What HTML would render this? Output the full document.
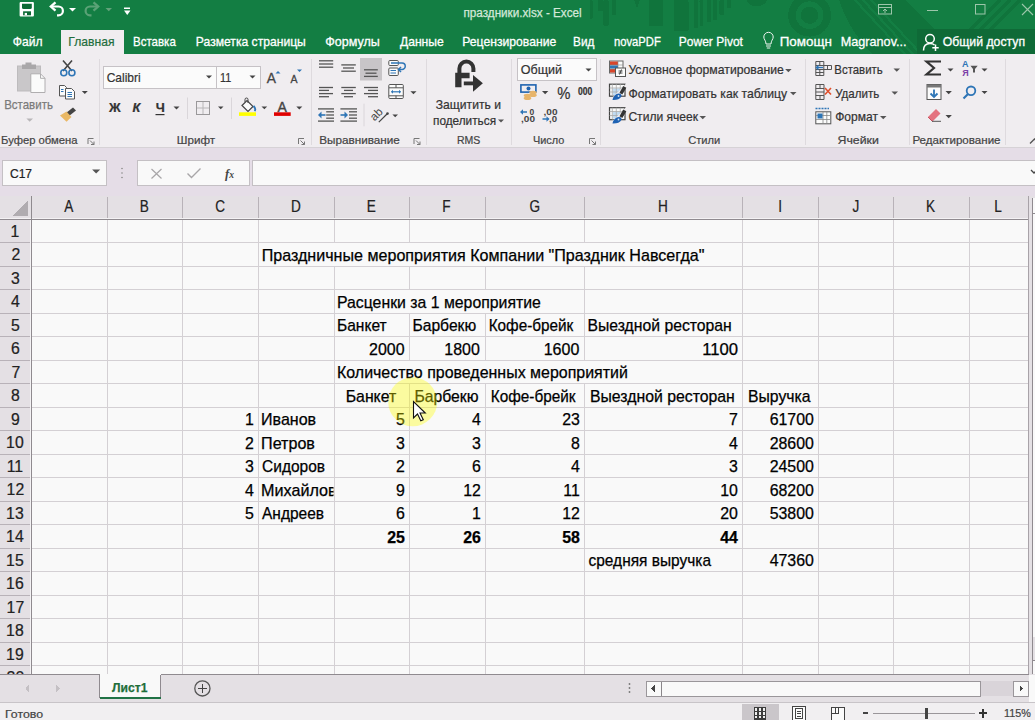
<!DOCTYPE html>
<html><head><meta charset="utf-8"><style>
html,body{margin:0;padding:0;width:1035px;height:720px;overflow:hidden;background:#f9f9f9;}
svg{position:absolute;left:0;top:0;display:block;}
text{white-space:pre;}
</style></head><body>
<svg width="1035" height="720" viewBox="0 0 1035 720" shape-rendering="crispEdges">
<rect x="0" y="0" width="1035" height="54" fill="#137e43" />
<rect x="589.6" y="0" width="3.199999999999932" height="19" fill="#10743c" rx="1.5"/>
<rect x="598" y="0" width="5" height="11" fill="#10743c" rx="1.5"/>
<rect x="603.4" y="0" width="5.300000000000068" height="26" fill="#10743c" rx="1.5"/>
<rect x="612" y="0" width="4" height="15" fill="#10743c" rx="1.5"/>
<rect x="649" y="0" width="14" height="26" fill="#10743c" rx="1.5"/>
<rect x="673.6" y="0" width="14.899999999999977" height="31" fill="#10743c" rx="1.5"/>
<rect x="693.8" y="0" width="4.2000000000000455" height="28" fill="#10743c" rx="1.5"/>
<rect x="699.5" y="0" width="3.5" height="26" fill="#10743c" rx="1.5"/>
<rect x="706.6" y="0" width="4.399999999999977" height="22" fill="#10743c" rx="1.5"/>
<rect x="713" y="0" width="4" height="20" fill="#10743c" rx="1.5"/>
<rect x="719.4" y="0" width="4.600000000000023" height="15" fill="#10743c" rx="1.5"/>
<rect x="726.8" y="0" width="4.2000000000000455" height="8" fill="#10743c" rx="1.5"/>
<path d="M634 0 L640 0 L637 8 Z" fill="#10743c"/>
<circle cx="757" cy="-5" r="11.5" fill="#10743c"/>
<circle cx="809.6" cy="15.2" r="17.6" fill="none" stroke="#10743c" stroke-width="7.6"/>
<circle cx="809.6" cy="15.2" r="8.7" fill="#10743c"/>
<path d="M839 0 H905 L935 30 L930 54 H872 C858 40 845 20 839 0 Z" fill="#10743c"/>
<line x1="855" y1="0" x2="905" y2="54" stroke="#137e43" stroke-width="2.2"/>
<line x1="863" y1="0" x2="913" y2="54" stroke="#137e43" stroke-width="2.2"/>
<line x1="871" y1="0" x2="921" y2="54" stroke="#137e43" stroke-width="2.2"/>
<path d="M905 0 H925 L960 35 L950 40 Z" fill="#137e43"/>
<line x1="1000" y1="0" x2="960" y2="40" stroke="#10743c" stroke-width="4"/>
<line x1="1010" y1="0" x2="970" y2="40" stroke="#10743c" stroke-width="4"/>
<line x1="1020" y1="0" x2="980" y2="40" stroke="#10743c" stroke-width="4"/>
<rect x="917" y="29" width="118" height="25" fill="#0f6a37" />
<rect x="61" y="30" width="63" height="25" fill="#f0edf0" />
<rect x="0" y="54" width="1035" height="94" fill="#f0edf0" />
<line x1="0" y1="147.5" x2="1035" y2="147.5" stroke="#d6d2d6" stroke-width="1" />
<line x1="99.5" y1="59" x2="99.5" y2="145" stroke="#dedade" stroke-width="1" />
<line x1="311.5" y1="59" x2="311.5" y2="145" stroke="#dedade" stroke-width="1" />
<line x1="426.5" y1="59" x2="426.5" y2="145" stroke="#dedade" stroke-width="1" />
<line x1="511.5" y1="59" x2="511.5" y2="145" stroke="#dedade" stroke-width="1" />
<line x1="600.5" y1="59" x2="600.5" y2="145" stroke="#dedade" stroke-width="1" />
<line x1="805.5" y1="59" x2="805.5" y2="145" stroke="#dedade" stroke-width="1" />
<line x1="909.5" y1="59" x2="909.5" y2="145" stroke="#dedade" stroke-width="1" />
<line x1="1005.5" y1="59" x2="1005.5" y2="145" stroke="#dedade" stroke-width="1" />
<rect x="0" y="148" width="1035" height="48" fill="#e5dde7" />
<rect x="2.5" y="160.5" width="103.5" height="25" fill="#f9f9f9" stroke="#c4c0c4" stroke-width="1"/>
<rect x="137.5" y="160.5" width="111.5" height="25" fill="#f9f9f9" stroke="#c4c0c4" stroke-width="1"/>
<rect x="252.5" y="160.5" width="790" height="25" fill="#f9f9f9" stroke="#c4c0c4" stroke-width="1"/>
<rect x="0" y="196" width="1035" height="23" fill="#e4e0e4" />
<rect x="31.5" y="220" width="997" height="455" fill="#f9f9f9" />
<rect x="0" y="219" width="31" height="456" fill="#e4e0e4" />
<line x1="107.5" y1="219.5" x2="107.5" y2="242.5" stroke="#d4d0d4" stroke-width="1" />
<line x1="107.5" y1="242.5" x2="107.5" y2="266.5" stroke="#d4d0d4" stroke-width="1" />
<line x1="107.5" y1="266.5" x2="107.5" y2="289.5" stroke="#d4d0d4" stroke-width="1" />
<line x1="107.5" y1="289.5" x2="107.5" y2="313.5" stroke="#d4d0d4" stroke-width="1" />
<line x1="107.5" y1="313.5" x2="107.5" y2="336.5" stroke="#d4d0d4" stroke-width="1" />
<line x1="107.5" y1="336.5" x2="107.5" y2="360.5" stroke="#d4d0d4" stroke-width="1" />
<line x1="107.5" y1="360.5" x2="107.5" y2="383.5" stroke="#d4d0d4" stroke-width="1" />
<line x1="107.5" y1="383.5" x2="107.5" y2="407.5" stroke="#d4d0d4" stroke-width="1" />
<line x1="107.5" y1="407.5" x2="107.5" y2="430.5" stroke="#d4d0d4" stroke-width="1" />
<line x1="107.5" y1="430.5" x2="107.5" y2="454.5" stroke="#d4d0d4" stroke-width="1" />
<line x1="107.5" y1="454.5" x2="107.5" y2="477.5" stroke="#d4d0d4" stroke-width="1" />
<line x1="107.5" y1="477.5" x2="107.5" y2="501.5" stroke="#d4d0d4" stroke-width="1" />
<line x1="107.5" y1="501.5" x2="107.5" y2="524.5" stroke="#d4d0d4" stroke-width="1" />
<line x1="107.5" y1="524.5" x2="107.5" y2="548.5" stroke="#d4d0d4" stroke-width="1" />
<line x1="107.5" y1="548.5" x2="107.5" y2="571.5" stroke="#d4d0d4" stroke-width="1" />
<line x1="107.5" y1="571.5" x2="107.5" y2="595.5" stroke="#d4d0d4" stroke-width="1" />
<line x1="107.5" y1="595.5" x2="107.5" y2="618.5" stroke="#d4d0d4" stroke-width="1" />
<line x1="107.5" y1="618.5" x2="107.5" y2="642.5" stroke="#d4d0d4" stroke-width="1" />
<line x1="107.5" y1="642.5" x2="107.5" y2="665.5" stroke="#d4d0d4" stroke-width="1" />
<line x1="107.5" y1="665.5" x2="107.5" y2="674" stroke="#d4d0d4" stroke-width="1" />
<line x1="182.5" y1="219.5" x2="182.5" y2="242.5" stroke="#d4d0d4" stroke-width="1" />
<line x1="182.5" y1="242.5" x2="182.5" y2="266.5" stroke="#d4d0d4" stroke-width="1" />
<line x1="182.5" y1="266.5" x2="182.5" y2="289.5" stroke="#d4d0d4" stroke-width="1" />
<line x1="182.5" y1="289.5" x2="182.5" y2="313.5" stroke="#d4d0d4" stroke-width="1" />
<line x1="182.5" y1="313.5" x2="182.5" y2="336.5" stroke="#d4d0d4" stroke-width="1" />
<line x1="182.5" y1="336.5" x2="182.5" y2="360.5" stroke="#d4d0d4" stroke-width="1" />
<line x1="182.5" y1="360.5" x2="182.5" y2="383.5" stroke="#d4d0d4" stroke-width="1" />
<line x1="182.5" y1="383.5" x2="182.5" y2="407.5" stroke="#d4d0d4" stroke-width="1" />
<line x1="182.5" y1="407.5" x2="182.5" y2="430.5" stroke="#d4d0d4" stroke-width="1" />
<line x1="182.5" y1="430.5" x2="182.5" y2="454.5" stroke="#d4d0d4" stroke-width="1" />
<line x1="182.5" y1="454.5" x2="182.5" y2="477.5" stroke="#d4d0d4" stroke-width="1" />
<line x1="182.5" y1="477.5" x2="182.5" y2="501.5" stroke="#d4d0d4" stroke-width="1" />
<line x1="182.5" y1="501.5" x2="182.5" y2="524.5" stroke="#d4d0d4" stroke-width="1" />
<line x1="182.5" y1="524.5" x2="182.5" y2="548.5" stroke="#d4d0d4" stroke-width="1" />
<line x1="182.5" y1="548.5" x2="182.5" y2="571.5" stroke="#d4d0d4" stroke-width="1" />
<line x1="182.5" y1="571.5" x2="182.5" y2="595.5" stroke="#d4d0d4" stroke-width="1" />
<line x1="182.5" y1="595.5" x2="182.5" y2="618.5" stroke="#d4d0d4" stroke-width="1" />
<line x1="182.5" y1="618.5" x2="182.5" y2="642.5" stroke="#d4d0d4" stroke-width="1" />
<line x1="182.5" y1="642.5" x2="182.5" y2="665.5" stroke="#d4d0d4" stroke-width="1" />
<line x1="182.5" y1="665.5" x2="182.5" y2="674" stroke="#d4d0d4" stroke-width="1" />
<line x1="258.5" y1="219.5" x2="258.5" y2="242.5" stroke="#d4d0d4" stroke-width="1" />
<line x1="258.5" y1="242.5" x2="258.5" y2="266.5" stroke="#d4d0d4" stroke-width="1" />
<line x1="258.5" y1="266.5" x2="258.5" y2="289.5" stroke="#d4d0d4" stroke-width="1" />
<line x1="258.5" y1="289.5" x2="258.5" y2="313.5" stroke="#d4d0d4" stroke-width="1" />
<line x1="258.5" y1="313.5" x2="258.5" y2="336.5" stroke="#d4d0d4" stroke-width="1" />
<line x1="258.5" y1="336.5" x2="258.5" y2="360.5" stroke="#d4d0d4" stroke-width="1" />
<line x1="258.5" y1="360.5" x2="258.5" y2="383.5" stroke="#d4d0d4" stroke-width="1" />
<line x1="258.5" y1="383.5" x2="258.5" y2="407.5" stroke="#d4d0d4" stroke-width="1" />
<line x1="258.5" y1="407.5" x2="258.5" y2="430.5" stroke="#d4d0d4" stroke-width="1" />
<line x1="258.5" y1="430.5" x2="258.5" y2="454.5" stroke="#d4d0d4" stroke-width="1" />
<line x1="258.5" y1="454.5" x2="258.5" y2="477.5" stroke="#d4d0d4" stroke-width="1" />
<line x1="258.5" y1="477.5" x2="258.5" y2="501.5" stroke="#d4d0d4" stroke-width="1" />
<line x1="258.5" y1="501.5" x2="258.5" y2="524.5" stroke="#d4d0d4" stroke-width="1" />
<line x1="258.5" y1="524.5" x2="258.5" y2="548.5" stroke="#d4d0d4" stroke-width="1" />
<line x1="258.5" y1="548.5" x2="258.5" y2="571.5" stroke="#d4d0d4" stroke-width="1" />
<line x1="258.5" y1="571.5" x2="258.5" y2="595.5" stroke="#d4d0d4" stroke-width="1" />
<line x1="258.5" y1="595.5" x2="258.5" y2="618.5" stroke="#d4d0d4" stroke-width="1" />
<line x1="258.5" y1="618.5" x2="258.5" y2="642.5" stroke="#d4d0d4" stroke-width="1" />
<line x1="258.5" y1="642.5" x2="258.5" y2="665.5" stroke="#d4d0d4" stroke-width="1" />
<line x1="258.5" y1="665.5" x2="258.5" y2="674" stroke="#d4d0d4" stroke-width="1" />
<line x1="334.5" y1="219.5" x2="334.5" y2="242.5" stroke="#d4d0d4" stroke-width="1" />
<line x1="334.5" y1="266.5" x2="334.5" y2="289.5" stroke="#d4d0d4" stroke-width="1" />
<line x1="334.5" y1="289.5" x2="334.5" y2="313.5" stroke="#d4d0d4" stroke-width="1" />
<line x1="334.5" y1="313.5" x2="334.5" y2="336.5" stroke="#d4d0d4" stroke-width="1" />
<line x1="334.5" y1="336.5" x2="334.5" y2="360.5" stroke="#d4d0d4" stroke-width="1" />
<line x1="334.5" y1="360.5" x2="334.5" y2="383.5" stroke="#d4d0d4" stroke-width="1" />
<line x1="334.5" y1="383.5" x2="334.5" y2="407.5" stroke="#d4d0d4" stroke-width="1" />
<line x1="334.5" y1="407.5" x2="334.5" y2="430.5" stroke="#d4d0d4" stroke-width="1" />
<line x1="334.5" y1="430.5" x2="334.5" y2="454.5" stroke="#d4d0d4" stroke-width="1" />
<line x1="334.5" y1="454.5" x2="334.5" y2="477.5" stroke="#d4d0d4" stroke-width="1" />
<line x1="334.5" y1="477.5" x2="334.5" y2="501.5" stroke="#d4d0d4" stroke-width="1" />
<line x1="334.5" y1="501.5" x2="334.5" y2="524.5" stroke="#d4d0d4" stroke-width="1" />
<line x1="334.5" y1="524.5" x2="334.5" y2="548.5" stroke="#d4d0d4" stroke-width="1" />
<line x1="334.5" y1="548.5" x2="334.5" y2="571.5" stroke="#d4d0d4" stroke-width="1" />
<line x1="334.5" y1="571.5" x2="334.5" y2="595.5" stroke="#d4d0d4" stroke-width="1" />
<line x1="334.5" y1="595.5" x2="334.5" y2="618.5" stroke="#d4d0d4" stroke-width="1" />
<line x1="334.5" y1="618.5" x2="334.5" y2="642.5" stroke="#d4d0d4" stroke-width="1" />
<line x1="334.5" y1="642.5" x2="334.5" y2="665.5" stroke="#d4d0d4" stroke-width="1" />
<line x1="334.5" y1="665.5" x2="334.5" y2="674" stroke="#d4d0d4" stroke-width="1" />
<line x1="409.5" y1="219.5" x2="409.5" y2="242.5" stroke="#d4d0d4" stroke-width="1" />
<line x1="409.5" y1="266.5" x2="409.5" y2="289.5" stroke="#d4d0d4" stroke-width="1" />
<line x1="409.5" y1="313.5" x2="409.5" y2="336.5" stroke="#d4d0d4" stroke-width="1" />
<line x1="409.5" y1="336.5" x2="409.5" y2="360.5" stroke="#d4d0d4" stroke-width="1" />
<line x1="409.5" y1="383.5" x2="409.5" y2="407.5" stroke="#d4d0d4" stroke-width="1" />
<line x1="409.5" y1="407.5" x2="409.5" y2="430.5" stroke="#d4d0d4" stroke-width="1" />
<line x1="409.5" y1="430.5" x2="409.5" y2="454.5" stroke="#d4d0d4" stroke-width="1" />
<line x1="409.5" y1="454.5" x2="409.5" y2="477.5" stroke="#d4d0d4" stroke-width="1" />
<line x1="409.5" y1="477.5" x2="409.5" y2="501.5" stroke="#d4d0d4" stroke-width="1" />
<line x1="409.5" y1="501.5" x2="409.5" y2="524.5" stroke="#d4d0d4" stroke-width="1" />
<line x1="409.5" y1="524.5" x2="409.5" y2="548.5" stroke="#d4d0d4" stroke-width="1" />
<line x1="409.5" y1="548.5" x2="409.5" y2="571.5" stroke="#d4d0d4" stroke-width="1" />
<line x1="409.5" y1="571.5" x2="409.5" y2="595.5" stroke="#d4d0d4" stroke-width="1" />
<line x1="409.5" y1="595.5" x2="409.5" y2="618.5" stroke="#d4d0d4" stroke-width="1" />
<line x1="409.5" y1="618.5" x2="409.5" y2="642.5" stroke="#d4d0d4" stroke-width="1" />
<line x1="409.5" y1="642.5" x2="409.5" y2="665.5" stroke="#d4d0d4" stroke-width="1" />
<line x1="409.5" y1="665.5" x2="409.5" y2="674" stroke="#d4d0d4" stroke-width="1" />
<line x1="485.5" y1="219.5" x2="485.5" y2="242.5" stroke="#d4d0d4" stroke-width="1" />
<line x1="485.5" y1="266.5" x2="485.5" y2="289.5" stroke="#d4d0d4" stroke-width="1" />
<line x1="485.5" y1="313.5" x2="485.5" y2="336.5" stroke="#d4d0d4" stroke-width="1" />
<line x1="485.5" y1="336.5" x2="485.5" y2="360.5" stroke="#d4d0d4" stroke-width="1" />
<line x1="485.5" y1="383.5" x2="485.5" y2="407.5" stroke="#d4d0d4" stroke-width="1" />
<line x1="485.5" y1="407.5" x2="485.5" y2="430.5" stroke="#d4d0d4" stroke-width="1" />
<line x1="485.5" y1="430.5" x2="485.5" y2="454.5" stroke="#d4d0d4" stroke-width="1" />
<line x1="485.5" y1="454.5" x2="485.5" y2="477.5" stroke="#d4d0d4" stroke-width="1" />
<line x1="485.5" y1="477.5" x2="485.5" y2="501.5" stroke="#d4d0d4" stroke-width="1" />
<line x1="485.5" y1="501.5" x2="485.5" y2="524.5" stroke="#d4d0d4" stroke-width="1" />
<line x1="485.5" y1="524.5" x2="485.5" y2="548.5" stroke="#d4d0d4" stroke-width="1" />
<line x1="485.5" y1="548.5" x2="485.5" y2="571.5" stroke="#d4d0d4" stroke-width="1" />
<line x1="485.5" y1="571.5" x2="485.5" y2="595.5" stroke="#d4d0d4" stroke-width="1" />
<line x1="485.5" y1="595.5" x2="485.5" y2="618.5" stroke="#d4d0d4" stroke-width="1" />
<line x1="485.5" y1="618.5" x2="485.5" y2="642.5" stroke="#d4d0d4" stroke-width="1" />
<line x1="485.5" y1="642.5" x2="485.5" y2="665.5" stroke="#d4d0d4" stroke-width="1" />
<line x1="485.5" y1="665.5" x2="485.5" y2="674" stroke="#d4d0d4" stroke-width="1" />
<line x1="584.5" y1="219.5" x2="584.5" y2="242.5" stroke="#d4d0d4" stroke-width="1" />
<line x1="584.5" y1="266.5" x2="584.5" y2="289.5" stroke="#d4d0d4" stroke-width="1" />
<line x1="584.5" y1="289.5" x2="584.5" y2="313.5" stroke="#d4d0d4" stroke-width="1" />
<line x1="584.5" y1="313.5" x2="584.5" y2="336.5" stroke="#d4d0d4" stroke-width="1" />
<line x1="584.5" y1="336.5" x2="584.5" y2="360.5" stroke="#d4d0d4" stroke-width="1" />
<line x1="584.5" y1="383.5" x2="584.5" y2="407.5" stroke="#d4d0d4" stroke-width="1" />
<line x1="584.5" y1="407.5" x2="584.5" y2="430.5" stroke="#d4d0d4" stroke-width="1" />
<line x1="584.5" y1="430.5" x2="584.5" y2="454.5" stroke="#d4d0d4" stroke-width="1" />
<line x1="584.5" y1="454.5" x2="584.5" y2="477.5" stroke="#d4d0d4" stroke-width="1" />
<line x1="584.5" y1="477.5" x2="584.5" y2="501.5" stroke="#d4d0d4" stroke-width="1" />
<line x1="584.5" y1="501.5" x2="584.5" y2="524.5" stroke="#d4d0d4" stroke-width="1" />
<line x1="584.5" y1="524.5" x2="584.5" y2="548.5" stroke="#d4d0d4" stroke-width="1" />
<line x1="584.5" y1="548.5" x2="584.5" y2="571.5" stroke="#d4d0d4" stroke-width="1" />
<line x1="584.5" y1="571.5" x2="584.5" y2="595.5" stroke="#d4d0d4" stroke-width="1" />
<line x1="584.5" y1="595.5" x2="584.5" y2="618.5" stroke="#d4d0d4" stroke-width="1" />
<line x1="584.5" y1="618.5" x2="584.5" y2="642.5" stroke="#d4d0d4" stroke-width="1" />
<line x1="584.5" y1="642.5" x2="584.5" y2="665.5" stroke="#d4d0d4" stroke-width="1" />
<line x1="584.5" y1="665.5" x2="584.5" y2="674" stroke="#d4d0d4" stroke-width="1" />
<line x1="742.5" y1="219.5" x2="742.5" y2="242.5" stroke="#d4d0d4" stroke-width="1" />
<line x1="742.5" y1="242.5" x2="742.5" y2="266.5" stroke="#d4d0d4" stroke-width="1" />
<line x1="742.5" y1="266.5" x2="742.5" y2="289.5" stroke="#d4d0d4" stroke-width="1" />
<line x1="742.5" y1="289.5" x2="742.5" y2="313.5" stroke="#d4d0d4" stroke-width="1" />
<line x1="742.5" y1="313.5" x2="742.5" y2="336.5" stroke="#d4d0d4" stroke-width="1" />
<line x1="742.5" y1="336.5" x2="742.5" y2="360.5" stroke="#d4d0d4" stroke-width="1" />
<line x1="742.5" y1="360.5" x2="742.5" y2="383.5" stroke="#d4d0d4" stroke-width="1" />
<line x1="742.5" y1="383.5" x2="742.5" y2="407.5" stroke="#d4d0d4" stroke-width="1" />
<line x1="742.5" y1="407.5" x2="742.5" y2="430.5" stroke="#d4d0d4" stroke-width="1" />
<line x1="742.5" y1="430.5" x2="742.5" y2="454.5" stroke="#d4d0d4" stroke-width="1" />
<line x1="742.5" y1="454.5" x2="742.5" y2="477.5" stroke="#d4d0d4" stroke-width="1" />
<line x1="742.5" y1="477.5" x2="742.5" y2="501.5" stroke="#d4d0d4" stroke-width="1" />
<line x1="742.5" y1="501.5" x2="742.5" y2="524.5" stroke="#d4d0d4" stroke-width="1" />
<line x1="742.5" y1="524.5" x2="742.5" y2="548.5" stroke="#d4d0d4" stroke-width="1" />
<line x1="742.5" y1="548.5" x2="742.5" y2="571.5" stroke="#d4d0d4" stroke-width="1" />
<line x1="742.5" y1="571.5" x2="742.5" y2="595.5" stroke="#d4d0d4" stroke-width="1" />
<line x1="742.5" y1="595.5" x2="742.5" y2="618.5" stroke="#d4d0d4" stroke-width="1" />
<line x1="742.5" y1="618.5" x2="742.5" y2="642.5" stroke="#d4d0d4" stroke-width="1" />
<line x1="742.5" y1="642.5" x2="742.5" y2="665.5" stroke="#d4d0d4" stroke-width="1" />
<line x1="742.5" y1="665.5" x2="742.5" y2="674" stroke="#d4d0d4" stroke-width="1" />
<line x1="818.5" y1="219.5" x2="818.5" y2="242.5" stroke="#d4d0d4" stroke-width="1" />
<line x1="818.5" y1="242.5" x2="818.5" y2="266.5" stroke="#d4d0d4" stroke-width="1" />
<line x1="818.5" y1="266.5" x2="818.5" y2="289.5" stroke="#d4d0d4" stroke-width="1" />
<line x1="818.5" y1="289.5" x2="818.5" y2="313.5" stroke="#d4d0d4" stroke-width="1" />
<line x1="818.5" y1="313.5" x2="818.5" y2="336.5" stroke="#d4d0d4" stroke-width="1" />
<line x1="818.5" y1="336.5" x2="818.5" y2="360.5" stroke="#d4d0d4" stroke-width="1" />
<line x1="818.5" y1="360.5" x2="818.5" y2="383.5" stroke="#d4d0d4" stroke-width="1" />
<line x1="818.5" y1="383.5" x2="818.5" y2="407.5" stroke="#d4d0d4" stroke-width="1" />
<line x1="818.5" y1="407.5" x2="818.5" y2="430.5" stroke="#d4d0d4" stroke-width="1" />
<line x1="818.5" y1="430.5" x2="818.5" y2="454.5" stroke="#d4d0d4" stroke-width="1" />
<line x1="818.5" y1="454.5" x2="818.5" y2="477.5" stroke="#d4d0d4" stroke-width="1" />
<line x1="818.5" y1="477.5" x2="818.5" y2="501.5" stroke="#d4d0d4" stroke-width="1" />
<line x1="818.5" y1="501.5" x2="818.5" y2="524.5" stroke="#d4d0d4" stroke-width="1" />
<line x1="818.5" y1="524.5" x2="818.5" y2="548.5" stroke="#d4d0d4" stroke-width="1" />
<line x1="818.5" y1="548.5" x2="818.5" y2="571.5" stroke="#d4d0d4" stroke-width="1" />
<line x1="818.5" y1="571.5" x2="818.5" y2="595.5" stroke="#d4d0d4" stroke-width="1" />
<line x1="818.5" y1="595.5" x2="818.5" y2="618.5" stroke="#d4d0d4" stroke-width="1" />
<line x1="818.5" y1="618.5" x2="818.5" y2="642.5" stroke="#d4d0d4" stroke-width="1" />
<line x1="818.5" y1="642.5" x2="818.5" y2="665.5" stroke="#d4d0d4" stroke-width="1" />
<line x1="818.5" y1="665.5" x2="818.5" y2="674" stroke="#d4d0d4" stroke-width="1" />
<line x1="893.5" y1="219.5" x2="893.5" y2="242.5" stroke="#d4d0d4" stroke-width="1" />
<line x1="893.5" y1="242.5" x2="893.5" y2="266.5" stroke="#d4d0d4" stroke-width="1" />
<line x1="893.5" y1="266.5" x2="893.5" y2="289.5" stroke="#d4d0d4" stroke-width="1" />
<line x1="893.5" y1="289.5" x2="893.5" y2="313.5" stroke="#d4d0d4" stroke-width="1" />
<line x1="893.5" y1="313.5" x2="893.5" y2="336.5" stroke="#d4d0d4" stroke-width="1" />
<line x1="893.5" y1="336.5" x2="893.5" y2="360.5" stroke="#d4d0d4" stroke-width="1" />
<line x1="893.5" y1="360.5" x2="893.5" y2="383.5" stroke="#d4d0d4" stroke-width="1" />
<line x1="893.5" y1="383.5" x2="893.5" y2="407.5" stroke="#d4d0d4" stroke-width="1" />
<line x1="893.5" y1="407.5" x2="893.5" y2="430.5" stroke="#d4d0d4" stroke-width="1" />
<line x1="893.5" y1="430.5" x2="893.5" y2="454.5" stroke="#d4d0d4" stroke-width="1" />
<line x1="893.5" y1="454.5" x2="893.5" y2="477.5" stroke="#d4d0d4" stroke-width="1" />
<line x1="893.5" y1="477.5" x2="893.5" y2="501.5" stroke="#d4d0d4" stroke-width="1" />
<line x1="893.5" y1="501.5" x2="893.5" y2="524.5" stroke="#d4d0d4" stroke-width="1" />
<line x1="893.5" y1="524.5" x2="893.5" y2="548.5" stroke="#d4d0d4" stroke-width="1" />
<line x1="893.5" y1="548.5" x2="893.5" y2="571.5" stroke="#d4d0d4" stroke-width="1" />
<line x1="893.5" y1="571.5" x2="893.5" y2="595.5" stroke="#d4d0d4" stroke-width="1" />
<line x1="893.5" y1="595.5" x2="893.5" y2="618.5" stroke="#d4d0d4" stroke-width="1" />
<line x1="893.5" y1="618.5" x2="893.5" y2="642.5" stroke="#d4d0d4" stroke-width="1" />
<line x1="893.5" y1="642.5" x2="893.5" y2="665.5" stroke="#d4d0d4" stroke-width="1" />
<line x1="893.5" y1="665.5" x2="893.5" y2="674" stroke="#d4d0d4" stroke-width="1" />
<line x1="969.5" y1="219.5" x2="969.5" y2="242.5" stroke="#d4d0d4" stroke-width="1" />
<line x1="969.5" y1="242.5" x2="969.5" y2="266.5" stroke="#d4d0d4" stroke-width="1" />
<line x1="969.5" y1="266.5" x2="969.5" y2="289.5" stroke="#d4d0d4" stroke-width="1" />
<line x1="969.5" y1="289.5" x2="969.5" y2="313.5" stroke="#d4d0d4" stroke-width="1" />
<line x1="969.5" y1="313.5" x2="969.5" y2="336.5" stroke="#d4d0d4" stroke-width="1" />
<line x1="969.5" y1="336.5" x2="969.5" y2="360.5" stroke="#d4d0d4" stroke-width="1" />
<line x1="969.5" y1="360.5" x2="969.5" y2="383.5" stroke="#d4d0d4" stroke-width="1" />
<line x1="969.5" y1="383.5" x2="969.5" y2="407.5" stroke="#d4d0d4" stroke-width="1" />
<line x1="969.5" y1="407.5" x2="969.5" y2="430.5" stroke="#d4d0d4" stroke-width="1" />
<line x1="969.5" y1="430.5" x2="969.5" y2="454.5" stroke="#d4d0d4" stroke-width="1" />
<line x1="969.5" y1="454.5" x2="969.5" y2="477.5" stroke="#d4d0d4" stroke-width="1" />
<line x1="969.5" y1="477.5" x2="969.5" y2="501.5" stroke="#d4d0d4" stroke-width="1" />
<line x1="969.5" y1="501.5" x2="969.5" y2="524.5" stroke="#d4d0d4" stroke-width="1" />
<line x1="969.5" y1="524.5" x2="969.5" y2="548.5" stroke="#d4d0d4" stroke-width="1" />
<line x1="969.5" y1="548.5" x2="969.5" y2="571.5" stroke="#d4d0d4" stroke-width="1" />
<line x1="969.5" y1="571.5" x2="969.5" y2="595.5" stroke="#d4d0d4" stroke-width="1" />
<line x1="969.5" y1="595.5" x2="969.5" y2="618.5" stroke="#d4d0d4" stroke-width="1" />
<line x1="969.5" y1="618.5" x2="969.5" y2="642.5" stroke="#d4d0d4" stroke-width="1" />
<line x1="969.5" y1="642.5" x2="969.5" y2="665.5" stroke="#d4d0d4" stroke-width="1" />
<line x1="969.5" y1="665.5" x2="969.5" y2="674" stroke="#d4d0d4" stroke-width="1" />
<line x1="31" y1="242.5" x2="1028" y2="242.5" stroke="#d4d0d4" stroke-width="1" />
<line x1="31" y1="266.5" x2="1028" y2="266.5" stroke="#d4d0d4" stroke-width="1" />
<line x1="31" y1="289.5" x2="1028" y2="289.5" stroke="#d4d0d4" stroke-width="1" />
<line x1="31" y1="313.5" x2="1028" y2="313.5" stroke="#d4d0d4" stroke-width="1" />
<line x1="31" y1="336.5" x2="1028" y2="336.5" stroke="#d4d0d4" stroke-width="1" />
<line x1="31" y1="360.5" x2="1028" y2="360.5" stroke="#d4d0d4" stroke-width="1" />
<line x1="31" y1="383.5" x2="1028" y2="383.5" stroke="#d4d0d4" stroke-width="1" />
<line x1="31" y1="407.5" x2="1028" y2="407.5" stroke="#d4d0d4" stroke-width="1" />
<line x1="31" y1="430.5" x2="1028" y2="430.5" stroke="#d4d0d4" stroke-width="1" />
<line x1="31" y1="454.5" x2="1028" y2="454.5" stroke="#d4d0d4" stroke-width="1" />
<line x1="31" y1="477.5" x2="1028" y2="477.5" stroke="#d4d0d4" stroke-width="1" />
<line x1="31" y1="501.5" x2="1028" y2="501.5" stroke="#d4d0d4" stroke-width="1" />
<line x1="31" y1="524.5" x2="1028" y2="524.5" stroke="#d4d0d4" stroke-width="1" />
<line x1="31" y1="548.5" x2="1028" y2="548.5" stroke="#d4d0d4" stroke-width="1" />
<line x1="31" y1="571.5" x2="1028" y2="571.5" stroke="#d4d0d4" stroke-width="1" />
<line x1="31" y1="595.5" x2="1028" y2="595.5" stroke="#d4d0d4" stroke-width="1" />
<line x1="31" y1="618.5" x2="1028" y2="618.5" stroke="#d4d0d4" stroke-width="1" />
<line x1="31" y1="642.5" x2="1028" y2="642.5" stroke="#d4d0d4" stroke-width="1" />
<line x1="31" y1="665.5" x2="1028" y2="665.5" stroke="#d4d0d4" stroke-width="1" />
<line x1="107.5" y1="197" x2="107.5" y2="219" stroke="#b8b2b8" stroke-width="1" />
<line x1="182.5" y1="197" x2="182.5" y2="219" stroke="#b8b2b8" stroke-width="1" />
<line x1="258.5" y1="197" x2="258.5" y2="219" stroke="#b8b2b8" stroke-width="1" />
<line x1="334.5" y1="197" x2="334.5" y2="219" stroke="#b8b2b8" stroke-width="1" />
<line x1="409.5" y1="197" x2="409.5" y2="219" stroke="#b8b2b8" stroke-width="1" />
<line x1="485.5" y1="197" x2="485.5" y2="219" stroke="#b8b2b8" stroke-width="1" />
<line x1="584.5" y1="197" x2="584.5" y2="219" stroke="#b8b2b8" stroke-width="1" />
<line x1="742.5" y1="197" x2="742.5" y2="219" stroke="#b8b2b8" stroke-width="1" />
<line x1="818.5" y1="197" x2="818.5" y2="219" stroke="#b8b2b8" stroke-width="1" />
<line x1="893.5" y1="197" x2="893.5" y2="219" stroke="#b8b2b8" stroke-width="1" />
<line x1="969.5" y1="197" x2="969.5" y2="219" stroke="#b8b2b8" stroke-width="1" />
<line x1="0" y1="242.5" x2="31" y2="242.5" stroke="#b8b2b8" stroke-width="1" />
<line x1="0" y1="266.5" x2="31" y2="266.5" stroke="#b8b2b8" stroke-width="1" />
<line x1="0" y1="289.5" x2="31" y2="289.5" stroke="#b8b2b8" stroke-width="1" />
<line x1="0" y1="313.5" x2="31" y2="313.5" stroke="#b8b2b8" stroke-width="1" />
<line x1="0" y1="336.5" x2="31" y2="336.5" stroke="#b8b2b8" stroke-width="1" />
<line x1="0" y1="360.5" x2="31" y2="360.5" stroke="#b8b2b8" stroke-width="1" />
<line x1="0" y1="383.5" x2="31" y2="383.5" stroke="#b8b2b8" stroke-width="1" />
<line x1="0" y1="407.5" x2="31" y2="407.5" stroke="#b8b2b8" stroke-width="1" />
<line x1="0" y1="430.5" x2="31" y2="430.5" stroke="#b8b2b8" stroke-width="1" />
<line x1="0" y1="454.5" x2="31" y2="454.5" stroke="#b8b2b8" stroke-width="1" />
<line x1="0" y1="477.5" x2="31" y2="477.5" stroke="#b8b2b8" stroke-width="1" />
<line x1="0" y1="501.5" x2="31" y2="501.5" stroke="#b8b2b8" stroke-width="1" />
<line x1="0" y1="524.5" x2="31" y2="524.5" stroke="#b8b2b8" stroke-width="1" />
<line x1="0" y1="548.5" x2="31" y2="548.5" stroke="#b8b2b8" stroke-width="1" />
<line x1="0" y1="571.5" x2="31" y2="571.5" stroke="#b8b2b8" stroke-width="1" />
<line x1="0" y1="595.5" x2="31" y2="595.5" stroke="#b8b2b8" stroke-width="1" />
<line x1="0" y1="618.5" x2="31" y2="618.5" stroke="#b8b2b8" stroke-width="1" />
<line x1="0" y1="642.5" x2="31" y2="642.5" stroke="#b8b2b8" stroke-width="1" />
<line x1="0" y1="665.5" x2="31" y2="665.5" stroke="#b8b2b8" stroke-width="1" />
<line x1="0" y1="218.5" x2="1028" y2="218.5" stroke="#f4f2f4" stroke-width="1" />
<line x1="30.5" y1="219" x2="30.5" y2="674" stroke="#f4f2f4" stroke-width="1" />
<line x1="0" y1="219.5" x2="1028" y2="219.5" stroke="#8f8a8f" stroke-width="1" />
<line x1="31.5" y1="196" x2="31.5" y2="674" stroke="#8f8a8f" stroke-width="1" />
<path d="M13 215.5 L28 215.5 L28 201 Z" fill="#b0acb0" stroke="none" stroke-width="1" />
<line x1="1028.5" y1="196" x2="1028.5" y2="675" stroke="#a8a2a8" stroke-width="1" />
<rect x="1029" y="196" width="6" height="479" fill="#e4e0e4" />
<line x1="1032.5" y1="198" x2="1032.5" y2="674" stroke="#8f8a8f" stroke-width="1" />
<rect x="1033" y="198" width="2" height="439" fill="#f9f9f9" />
<line x1="1033" y1="213.5" x2="1035" y2="213.5" stroke="#8f8a8f" stroke-width="1" />
<rect x="1033" y="661" width="2" height="13" fill="#f9f9f9" />
<line x1="1033" y1="660.5" x2="1035" y2="660.5" stroke="#8f8a8f" stroke-width="1" />
<rect x="0" y="675" width="1029" height="28" fill="#e4e0e4" />
<line x1="0" y1="674.5" x2="1029" y2="674.5" stroke="#8f8a8f" stroke-width="1" />
<rect x="100" y="674" width="61" height="24" fill="#f9f9f9" />
<line x1="99.5" y1="675" x2="99.5" y2="698" stroke="#8f8a8f" stroke-width="1" />
<line x1="160.5" y1="675" x2="160.5" y2="698" stroke="#8f8a8f" stroke-width="1" />
<rect x="100" y="697" width="61" height="2" fill="#217346" />
<line x1="0" y1="702.5" x2="1035" y2="702.5" stroke="#c8c4c8" stroke-width="1" />
<path d="M29 684.5 L25.5 688.5 L29 692.5 Z" fill="#c4c0c4" stroke="none" stroke-width="1" />
<path d="M56 684.5 L59.5 688.5 L56 692.5 Z" fill="#c4c0c4" stroke="none" stroke-width="1" />
<circle cx="202.4" cy="688.4" r="7.6" fill="none" stroke="#555" stroke-width="1.3" shape-rendering="geometricPrecision"/>
<line x1="198" y1="688.4" x2="206.8" y2="688.4" stroke="#444" stroke-width="1.8" />
<line x1="202.4" y1="684" x2="202.4" y2="692.8" stroke="#444" stroke-width="1.8" />
<circle cx="629.5" cy="684" r="0.9" fill="#777" shape-rendering="geometricPrecision"/>
<circle cx="629.5" cy="688" r="0.9" fill="#777" shape-rendering="geometricPrecision"/>
<circle cx="629.5" cy="692" r="0.9" fill="#777" shape-rendering="geometricPrecision"/>
<rect x="980" y="681" width="33" height="15" fill="#d9d4d9" />
<rect x="646.5" y="681.5" width="334" height="14.5" fill="#f9f9f9" stroke="#9a969a"/>
<line x1="661" y1="682" x2="661" y2="696" stroke="#8a868a" stroke-width="1" />
<path d="M651.2 688.6 L655 685 L655 692.3 Z" fill="#444" stroke="none" stroke-width="1" />
<rect x="1013.5" y="681.5" width="15" height="14.5" fill="#f9f9f9" stroke="#9a969a"/>
<path d="M1023.4 688.6 L1019.5 685 L1019.5 692.4 Z" fill="#444" stroke="none" stroke-width="1" />
<rect x="0" y="703" width="1035" height="17" fill="#f1eff1" />
<rect x="741.5" y="703.5" width="37.5" height="17" fill="#cac6ca" />
<rect x="753.5" y="706.5" width="12.5" height="14" fill="#3c3c3c" />
<rect x="754.8" y="708.0" width="2.6" height="2.6" fill="#f0f0f0" />
<rect x="754.8" y="711.9" width="2.6" height="2.6" fill="#f0f0f0" />
<rect x="754.8" y="715.8" width="2.6" height="2.6" fill="#f0f0f0" />
<rect x="758.6999999999999" y="708.0" width="2.6" height="2.6" fill="#f0f0f0" />
<rect x="758.6999999999999" y="711.9" width="2.6" height="2.6" fill="#f0f0f0" />
<rect x="758.6999999999999" y="715.8" width="2.6" height="2.6" fill="#f0f0f0" />
<rect x="762.5999999999999" y="708.0" width="2.6" height="2.6" fill="#f0f0f0" />
<rect x="762.5999999999999" y="711.9" width="2.6" height="2.6" fill="#f0f0f0" />
<rect x="762.5999999999999" y="715.8" width="2.6" height="2.6" fill="#f0f0f0" />
<rect x="792.5" y="706.5" width="13" height="14" fill="#fbfbfb" stroke="#444" stroke-width="1.2"/>
<rect x="795.5" y="708.5" width="7" height="10" fill="none" stroke="#444" stroke-width="1"/>
<line x1="797" y1="711" x2="801" y2="711" stroke="#444" stroke-width="1" />
<line x1="797" y1="713.5" x2="801" y2="713.5" stroke="#444" stroke-width="1" />
<line x1="797" y1="716" x2="801" y2="716" stroke="#444" stroke-width="1" />
<rect x="831.2" y="707.5" width="13.3" height="13" fill="#fbfbfb" stroke="#444" stroke-width="1.3"/>
<path d="M835.4 707.5 V713.9 M838.8 707.5 V713.9 M831 713.9 H839.3" fill="none" stroke="#444" stroke-width="1.1" />
<line x1="862.5" y1="713.3" x2="868" y2="713.3" stroke="#444" stroke-width="1.8" />
<line x1="872.6" y1="713.3" x2="974.6" y2="713.3" stroke="#9a969a" stroke-width="1" />
<rect x="924.7" y="707.6" width="3.6" height="11" fill="#444" />
<line x1="978.5" y1="713.3" x2="987.2" y2="713.3" stroke="#333" stroke-width="2" />
<line x1="982.85" y1="709" x2="982.85" y2="717.7" stroke="#333" stroke-width="2" />
<g shape-rendering="geometricPrecision">
<rect x="19.6" y="2.1" width="14.3" height="14.3" rx="1" fill="#fff"/>
<path d="M22 3.7 H31.8 V7.5 Q31.8 9 30.3 9 H23.5 Q22 9 22 7.5 Z" fill="#0d6a35"/>
<rect x="23.1" y="11.3" width="7.9" height="4" fill="#0d6a35"/>
<rect x="24.7" y="12.9" width="2.3" height="2.4" fill="#fff"/>
<path d="M52 6.5 H58.5 A4.4 4.4 0 0 1 58.5 15.3 H57" fill="none" stroke="#fff" stroke-width="2.2"/>
<path d="M55.5 2.3 L50.8 6.5 L55.5 10.7" fill="none" stroke="#fff" stroke-width="2.3"/>
<path d="M69.0 8 L76.0 8 L72.5 11.5 Z" fill="#fff"/>
<path d="M97 6.5 H90 A4.4 4.4 0 0 0 90 15.3 H91.5" fill="none" stroke="#5aa276" stroke-width="2.2"/>
<path d="M93.5 2.3 L98.2 6.5 L93.5 10.7" fill="none" stroke="#5aa276" stroke-width="2.3"/>
<path d="M105.5 8 L112.0 8 L108.75 11.25 Z" fill="#62a27a"/>
<rect x="124" y="7.5" width="6" height="1.5" fill="#fff"/>
<path d="M124 10.5 H130.5 L127.25 15 Z" fill="#fff"/>
<rect x="878.5" y="4.5" width="13" height="9.5" fill="none" stroke="#9cc6aa"/>
<path d="M878.5 7.5 H891.5 M885 9 V13 M883 11 L885 9 L887 11" fill="none" stroke="#9cc6aa"/>
<line x1="927" y1="10.5" x2="938" y2="10.5" stroke="#9cc6aa"/>
<rect x="975.5" y="4.5" width="9.5" height="9.5" fill="none" stroke="#9cc6aa"/>
<path d="M1022 4 L1033 15 M1033 4 L1022 15" stroke="#9cc6aa" stroke-width="1.1"/>
<path d="M766 44 C766 40.5 763.8 39.5 763.8 37 A4.7 4.7 0 0 1 773.2 37 C773.2 39.5 771 40.5 771 44 Z" fill="none" stroke="#eef5f0" stroke-width="1"/>
<line x1="766" y1="46" x2="771" y2="46" stroke="#eef5f0" stroke-width="1"/>
<line x1="766.8" y1="48" x2="770.2" y2="48" stroke="#eef5f0" stroke-width="1"/>
<circle cx="930" cy="38.8" r="4.3" fill="none" stroke="#fff" stroke-width="1.5"/>
<path d="M923.5 50.5 C923.5 45 926 43.5 930 43.5 C932 43.5 933.5 44 934.5 45" fill="none" stroke="#fff" stroke-width="1.5"/>
<path d="M935.5 44.5 V51 M932.3 47.75 H938.7" stroke="#fff" stroke-width="1.5"/>
<rect x="17.5" y="66" width="23" height="25" fill="#c9c7c9" stroke="#bdbbbd"/>
<rect x="22" y="64.5" width="14" height="4.5" fill="#a9a7a9"/>
<rect x="25.5" y="62.5" width="6" height="3" fill="#a9a7a9"/>
<path d="M30.8 73.8 H40.5 L45 78.3 V92.5 H30.8 Z" fill="#fbfbfb" stroke="#b0aeb0"/>
<path d="M40.5 73.8 V78.3 H45" fill="none" stroke="#b0aeb0"/>
<path d="M26.4 118.5 L33.0 118.5 L29.7 121.8 Z" fill="#b8b6b8"/>
<path d="M63 60.5 L72 71 M72 60.5 L63 71" stroke="#444" stroke-width="1.6"/>
<circle cx="63.8" cy="72.7" r="3" fill="none" stroke="#2e75b6" stroke-width="1.6"/>
<circle cx="71.9" cy="72.7" r="3" fill="none" stroke="#2e75b6" stroke-width="1.6"/>
<path d="M59.5 85.5 H64.5 L66.5 87.5 V96 H59.5 Z" fill="#fbfbfb" stroke="#555"/>
<path d="M65.5 88.5 H71.5 L74.5 91.5 V99 H65.5 Z" fill="#fbfbfb" stroke="#555"/>
<path d="M61 89.5 H63.5 M61 91.5 H63.5 M67.5 92.5 H72 M67.5 94.5 H72 M67.5 96.5 H72" stroke="#2e75b6" stroke-width="1"/>
<path d="M81.8 91 L87.8 91 L84.8 94.0 Z" fill="#444"/>
<path d="M66 113 L73 107.5 L76 110.5 L69 116 Z" fill="#444"/>
<path d="M60 115.5 L66.5 111.5 L71.5 117 L66.5 121.7 Z" fill="#e9b865"/>
<rect x="103.5" y="66.5" width="113" height="22" fill="#fbfbfb" stroke="#c6c2c6"/>
<rect x="216.5" y="66.5" width="44" height="22" fill="#fbfbfb" stroke="#c6c2c6"/>
<path d="M206.0 75.5 L212.0 75.5 L209.0 78.5 Z" fill="#444"/>
<path d="M249.5 75.5 L255.5 75.5 L252.5 78.5 Z" fill="#444"/>
<text x="266.8" y="82.7" font-family="Liberation Sans" font-size="13.8" fill="#444" stroke="#444" stroke-width="0.3">A</text>
<path d="M275.5 73.5 L278 71 L280.5 73.5 Z" fill="#2e75b6"/>
<text x="290.5" y="82.7" font-family="Liberation Sans" font-size="10.5" fill="#444" stroke="#444" stroke-width="0.3">A</text>
<path d="M297 69.5 L302 69.5 L299.5 72 Z" fill="#2e75b6"/>
<path d="M173.5 106.5 L179.5 106.5 L176.5 109.5 Z" fill="#444"/>
<line x1="187.5" y1="97.5" x2="187.5" y2="119" stroke="#dad6da"/>
<rect x="196.5" y="101.5" width="13" height="13" fill="none" stroke="#9a989a"/>
<path d="M203 102 V114 M197 108 H209" stroke="#b8b6b8" stroke-width="1"/>
<path d="M218.0 106.5 L223.5 106.5 L220.75 109.25 Z" fill="#444"/>
<line x1="231.5" y1="97.5" x2="231.5" y2="119" stroke="#dad6da"/>
<path d="M242 105.5 L247 100.5 L253 106.5 L248 111.5 Z" fill="#fbfbfb" stroke="#444" stroke-width="1.2"/>
<path d="M245 102 V99.5 A1.5 1.5 0 0 1 248 99.5 V103" fill="none" stroke="#444" stroke-width="1"/>
<path d="M253.5 106 C255.5 108 255.5 110 254.5 111" fill="none" stroke="#2e75b6" stroke-width="1.8"/>
<rect x="239" y="112.3" width="17" height="3.6" fill="#ffff00"/>
<path d="M261.5 106.5 L267.2 106.5 L264.35 109.35 Z" fill="#444"/>
<text x="277.6" y="111.8" font-family="Liberation Sans" font-size="14" fill="#444" stroke="#444" stroke-width="0.4">A</text>
<rect x="274" y="112.3" width="16.7" height="3.6" fill="#e00000"/>
<path d="M296.3 106.5 L302.3 106.5 L299.3 109.5 Z" fill="#444"/>
<path d="M88.0 144 V138.5 H93.5" fill="none" stroke="#777" stroke-width="1"/><path d="M90.0 140.5 L94.0 144.5 M94.0 141.5 V144.5 H91.0" fill="none" stroke="#777" stroke-width="1"/>
<path d="M298.5 144 V138.5 H304" fill="none" stroke="#777" stroke-width="1"/><path d="M300.5 140.5 L304.5 144.5 M304.5 141.5 V144.5 H301.5" fill="none" stroke="#777" stroke-width="1"/>
<path d="M414.0 144 V138.5 H419.5" fill="none" stroke="#777" stroke-width="1"/><path d="M416.0 140.5 L420.0 144.5 M420.0 141.5 V144.5 H417.0" fill="none" stroke="#777" stroke-width="1"/>
<path d="M589.5 144 V138.5 H595" fill="none" stroke="#777" stroke-width="1"/><path d="M591.5 140.5 L595.5 144.5 M595.5 141.5 V144.5 H592.5" fill="none" stroke="#777" stroke-width="1"/>
<path d="M1030 143.5 L1034.5 139 L1039 143.5" fill="none" stroke="#555" stroke-width="1.3"/>
<line x1="319" y1="60.8" x2="333.2" y2="60.8" stroke="#555" stroke-width="1.3"/><line x1="319" y1="64" x2="333.2" y2="64" stroke="#555" stroke-width="1.3"/><line x1="319" y1="67.2" x2="333.2" y2="67.2" stroke="#555" stroke-width="1.3"/>
<line x1="341.3" y1="64.9" x2="355.8" y2="64.9" stroke="#555" stroke-width="1.3"/><line x1="343" y1="68" x2="354" y2="68" stroke="#555" stroke-width="1.3"/><line x1="341.3" y1="71.2" x2="355.8" y2="71.2" stroke="#555" stroke-width="1.3"/>
<rect x="360" y="58" width="22" height="22.5" fill="#c8c5c8"/>
<line x1="364" y1="69.8" x2="377.8" y2="69.8" stroke="#555" stroke-width="1.3"/><line x1="365.5" y1="73.2" x2="376.5" y2="73.2" stroke="#555" stroke-width="1.3"/><line x1="364" y1="76.4" x2="377.8" y2="76.4" stroke="#555" stroke-width="1.3"/>
<rect x="388.8" y="60.5" width="9.5" height="5" rx="1" fill="#fbfbfb" stroke="#555"/>
<rect x="388.8" y="68" width="9.5" height="7.5" rx="1" fill="#fbfbfb" stroke="#555"/>
<path d="M391 63 H402 A3 3 0 0 1 402 69.5 H399" fill="none" stroke="#2e75b6" stroke-width="1.5"/>
<path d="M401 67 L398.5 69.5 L401 72" fill="none" stroke="#2e75b6" stroke-width="1.5"/>
<path d="M390.5 70.5 H396 M390.5 73 H396" stroke="#2e75b6" stroke-width="1"/>
<line x1="319" y1="87.5" x2="333" y2="87.5" stroke="#555" stroke-width="1.3"/><line x1="319" y1="90.4" x2="329" y2="90.4" stroke="#555" stroke-width="1.3"/><line x1="319" y1="93.6" x2="333" y2="93.6" stroke="#555" stroke-width="1.3"/><line x1="319" y1="96.7" x2="329" y2="96.7" stroke="#555" stroke-width="1.3"/>
<line x1="341.3" y1="87.5" x2="355.8" y2="87.5" stroke="#555" stroke-width="1.3"/><line x1="344" y1="90.4" x2="353" y2="90.4" stroke="#555" stroke-width="1.3"/><line x1="341.3" y1="93.6" x2="355.8" y2="93.6" stroke="#555" stroke-width="1.3"/><line x1="344" y1="96.7" x2="353" y2="96.7" stroke="#555" stroke-width="1.3"/>
<line x1="364" y1="87.5" x2="378" y2="87.5" stroke="#555" stroke-width="1.3"/><line x1="368" y1="90.4" x2="378" y2="90.4" stroke="#555" stroke-width="1.3"/><line x1="364" y1="93.6" x2="378" y2="93.6" stroke="#555" stroke-width="1.3"/><line x1="368" y1="96.7" x2="378" y2="96.7" stroke="#555" stroke-width="1.3"/>
<rect x="388.8" y="84.5" width="14.5" height="14" rx="1" fill="#fbfbfb" stroke="#555"/>
<path d="M389 87.8 H403 M389 95.8 H403 M396 84.5 V87.8 M396 95.8 V99" stroke="#555" stroke-width="1"/>
<path d="M391.5 91.8 H400.5" stroke="#2e75b6" stroke-width="1.2"/><path d="M391 91.8 L393 89.8 V93.8 Z M401 91.8 L399 89.8 V93.8 Z" fill="#2e75b6"/>
<path d="M410.4 91.3 L416.5 91.3 L413.45 94.35000000000001 Z" fill="#444"/>
<line x1="318" y1="108.9" x2="334" y2="108.9" stroke="#555" stroke-width="1.3"/><line x1="318" y1="121.1" x2="334" y2="121.1" stroke="#555" stroke-width="1.3"/>
<line x1="326.2" y1="111.8" x2="334" y2="111.8" stroke="#555" stroke-width="1.3"/><line x1="326.2" y1="115" x2="334" y2="115" stroke="#555" stroke-width="1.3"/><line x1="326.2" y1="118.2" x2="334" y2="118.2" stroke="#555" stroke-width="1.3"/>
<path d="M319 115 H325.5" stroke="#2e75b6" stroke-width="1.6"/><path d="M318 115 L321.5 111.5 V118.5 Z" fill="#2e75b6"/>
<line x1="340.4" y1="108.9" x2="357" y2="108.9" stroke="#555" stroke-width="1.3"/><line x1="340.4" y1="121.1" x2="357" y2="121.1" stroke="#555" stroke-width="1.3"/>
<line x1="349" y1="111.8" x2="357" y2="111.8" stroke="#555" stroke-width="1.3"/><line x1="349" y1="115" x2="357" y2="115" stroke="#555" stroke-width="1.3"/><line x1="349" y1="118.2" x2="357" y2="118.2" stroke="#555" stroke-width="1.3"/>
<path d="M340.5 115 H346.5" stroke="#2e75b6" stroke-width="1.6"/><path d="M348 115 L344.5 111.5 V118.5 Z" fill="#2e75b6"/>
<line x1="364" y1="103.7" x2="364" y2="126.3" stroke="#dad6da"/>
<text x="0" y="0" font-family="Liberation Sans" font-size="11.5" fill="#444" transform="translate(374.5 121.5) rotate(-45)">ab</text>
<path d="M378.8 122.2 L387 114" stroke="#444" stroke-width="1.2"/><circle cx="387.5" cy="113.6" r="1.3" fill="#444"/>
<path d="M392.4 114.5 L398.0 114.5 L395.2 117.30000000000001 Z" fill="#444"/>
<path d="M459.4 74 V68.5 A7 7 0 0 1 473.4 68.5 V72" fill="none" stroke="#333" stroke-width="4"/>
<path d="M455.2 72.8 H469.6 V78.3 H461.5 V87.3 H455.2 Z" fill="#333"/>
<rect x="463.8" y="81.5" width="9.5" height="3.8" fill="#333"/>
<path d="M473 75.1 L482.9 83.3 L473 91.7 Z" fill="#333"/>
<path d="M498.0 119.5 L504.0 119.5 L501.0 122.5 Z" fill="#555"/>
<rect x="517.5" y="58.5" width="79" height="22" fill="#fbfbfb" stroke="#c6c2c6"/>
<path d="M585.5 68.5 L591.5 68.5 L588.5 71.5 Z" fill="#444"/>
<rect x="520.9" y="84.9" width="15" height="7.2" fill="none" stroke="#1f63b0" stroke-width="1.6"/>
<circle cx="528.5" cy="88.5" r="2" fill="#1f63b0"/>
<ellipse cx="533" cy="92.5" rx="3.8" ry="1.8" fill="#e7b46a"/><ellipse cx="533" cy="95.3" rx="3.8" ry="1.8" fill="#e7b46a"/>
<ellipse cx="527.5" cy="95.5" rx="3.8" ry="1.8" fill="#e7b46a"/><ellipse cx="527.5" cy="98.3" rx="3.8" ry="1.8" fill="#e7b46a"/>
<path d="M542.0 91 L548.3 91 L545.15 94.14999999999998 Z" fill="#444"/>
<text x="520" y="0" font-family="Liberation Sans" font-size="9" fill="#444"></text>
<path d="M521 112 H527" stroke="#2e75b6" stroke-width="1.5"/><path d="M520 112 L523 109.3 V114.7 Z" fill="#2e75b6"/>
<text x="529.5" y="114.6" font-family="Liberation Sans" font-size="8.5" font-weight="bold" fill="#444">0</text>
<text x="521" y="122.4" font-family="Liberation Sans" font-size="8.5" font-weight="bold" fill="#444" textLength="14" lengthAdjust="spacingAndGlyphs">,00</text>
<text x="543.5" y="114.6" font-family="Liberation Sans" font-size="8.5" font-weight="bold" fill="#444" textLength="14" lengthAdjust="spacingAndGlyphs">,00</text>
<path d="M542.5 119 H548.5" stroke="#2e75b6" stroke-width="1.5"/><path d="M549.5 119 L546.5 116.3 V121.7 Z" fill="#2e75b6"/>
<text x="549" y="122.4" font-family="Liberation Sans" font-size="8.5" font-weight="bold" fill="#444" textLength="8" lengthAdjust="spacingAndGlyphs">,0</text>
<rect x="609.5" y="61" width="13.5" height="12" fill="#fbfbfb" stroke="#666"/>
<rect x="610" y="61.5" width="8" height="3.5" fill="#d9452b"/><rect x="610" y="65.3" width="8" height="3.3" fill="#2e75b6"/><rect x="610" y="69" width="5" height="3.5" fill="#d9452b"/>
<path d="M618 61 V73 M610 65 H623 M610 69 H623" stroke="#888" stroke-width="0.6"/>
<rect x="615.5" y="68" width="10" height="8.5" fill="#fbfbfb" stroke="#555"/>
<path d="M618.5 71 H622.5 M618.5 73 H622.5 M621.5 69.5 L619.5 74.5" stroke="#333" stroke-width="0.9"/>
<g transform="translate(0 -0.29999999999999716)"><rect x="609.5" y="84.5" width="15.5" height="12" fill="#fbfbfb" stroke="#444" stroke-width="1.2"/><rect x="612.8" y="88.8" width="7.5" height="6.5" fill="#c2dcf2"/><path d="M612.3 84.5 V96.5 M616.3 84.5 V96.5 M620.3 84.5 V96.5 M609.5 88.3 H625 M609.5 92.3 H625" stroke="#aaa" stroke-width="0.8"/><path d="M627 85 L611 101" stroke="#f0edf0" stroke-width="2.5"/><path d="M623.2 86.3 L626.3 88 L622.3 94.8 L619.5 93 Z" fill="#333"/><path d="M612.5 100.3 C613 97 615.8 93.8 618.8 93.8 C620.8 93.8 622 95.2 621.4 96.8 C620.2 99.3 616.5 100.5 612.5 100.3 Z" fill="#1f62b3"/><circle cx="618.5" cy="96.3" r="0.9" fill="#d0e4f5"/></g>
<g transform="translate(0 23.200000000000003)"><rect x="609.5" y="84.5" width="15.5" height="12" fill="#fbfbfb" stroke="#444" stroke-width="1.2"/><rect x="612.8" y="88.8" width="7.5" height="6.5" fill="#c2dcf2"/><path d="M612.3 84.5 V96.5 M616.3 84.5 V96.5 M620.3 84.5 V96.5 M609.5 88.3 H625 M609.5 92.3 H625" stroke="#aaa" stroke-width="0.8"/><path d="M627 85 L611 101" stroke="#f0edf0" stroke-width="2.5"/><path d="M623.2 86.3 L626.3 88 L622.3 94.8 L619.5 93 Z" fill="#333"/><path d="M612.5 100.3 C613 97 615.8 93.8 618.8 93.8 C620.8 93.8 622 95.2 621.4 96.8 C620.2 99.3 616.5 100.5 612.5 100.3 Z" fill="#1f62b3"/><circle cx="618.5" cy="96.3" r="0.9" fill="#d0e4f5"/></g>
<path d="M785.1 69 L791.6 69 L788.35 72.25 Z" fill="#555"/>
<path d="M790.0 92 L796.5 92 L793.25 95.25 Z" fill="#555"/>
<path d="M699.5 116 L706.0 116 L702.75 119.25 Z" fill="#555"/>
<path d="M815.8 61.5 H823.8 V75.5 H815.8 Z M815.8 65.5 H831.5 V69.5 H815.8 M815.8 72.5 H823.8 M819.8 61.5 V65.5 M819.8 69.5 V75.5 M827.5 65.5 V69.5" fill="none" stroke="#555" stroke-width="1"/>
<path d="M817 67.5 H823" stroke="#2e75b6" stroke-width="1.4"/><path d="M815.5 67.5 L818.5 64.5 V70.5 Z" fill="#2e75b6"/>
<path d="M815.8 84.5 H824 V99.5 H815.8 Z M815.8 88.5 H824 M815.8 92 H824 M815.8 95.5 H824 M820 84.5 V88.5 M820 95.5 V99.5" fill="none" stroke="#555" stroke-width="1"/>
<path d="M825 88 L831 94.5 M831 88 L825 94.5" stroke="#e0502d" stroke-width="1.6"/>
<path d="M815.5 108.5 H829" stroke="#2e75b6" stroke-width="1.3" stroke-dasharray="2 1"/>
<rect x="815.8" y="111.8" width="15" height="12" fill="#fbfbfb" stroke="#555"/>
<path d="M815.8 115.5 H830.8 M815.8 119.5 H830.8 M823 111.8 V123.8 M826.8 111.8 V123.8" stroke="#888" stroke-width="0.8"/>
<rect x="817.5" y="113.5" width="5" height="5" fill="#2e75b6"/>
<line x1="155.5" y1="114.6" x2="164.5" y2="114.6" stroke="#333" stroke-width="1.2"/>
<path d="M893.5 68.5 L900.0 68.5 L896.75 71.75 Z" fill="#555"/>
<path d="M891.5 91.5 L898.0 91.5 L894.75 94.75 Z" fill="#555"/>
<path d="M880.0 116 L886.5 116 L883.25 119.25 Z" fill="#555"/>
<path d="M941 61.5 H926.5 L934 68 L926.5 74.5 H941" fill="none" stroke="#333" stroke-width="2.2"/>
<path d="M947.5 68.5 L953.5 68.5 L950.5 71.5 Z" fill="#444"/>
<text x="962" y="67.3" font-family="Liberation Sans" font-size="9" font-weight="bold" fill="#2e75b6">A</text>
<text x="962.3" y="76.4" font-family="Liberation Sans" font-size="9" font-weight="bold" fill="#7c3fa8">Я</text>
<path d="M970.5 65.7 H977.7 L975 69 V72.5 H973 V69 Z" fill="#555"/>
<path d="M981.5 68.5 L987.5 68.5 L984.5 71.5 Z" fill="#444"/>
<rect x="927" y="84.5" width="14" height="15" fill="#fbfbfb" stroke="#555"/>
<rect x="927" y="84.5" width="14" height="3" fill="#777"/>
<path d="M934 89.5 V97 M930.5 93.5 L934 97 L937.5 93.5" fill="none" stroke="#2e75b6" stroke-width="1.8"/>
<path d="M945.5 91 L951.9 91 L948.7 94.19999999999999 Z" fill="#444"/>
<circle cx="971" cy="90.8" r="4.3" fill="none" stroke="#2e75b6" stroke-width="1.8"/>
<path d="M968 94 L963.5 98.5" stroke="#2e75b6" stroke-width="2.2"/>
<path d="M981.5 91 L987.5 91 L984.5 94.0 Z" fill="#444"/>
<path d="M928 117 L936 109 L940.5 113.5 L932.5 121.5 Z" fill="#e4727f"/>
<path d="M928 117 L932.5 121.5" stroke="#c95060" stroke-width="1"/>
<line x1="932" y1="121.3" x2="941" y2="121.3" stroke="#555" stroke-width="1"/>
<path d="M945.5 115 L951.9 115 L948.7 118.19999999999999 Z" fill="#444"/>
<path d="M92.1 169.5 L100.2 169.5 L96.15 173.55 Z" fill="#555"/>
<circle cx="122" cy="168.5" r="0.8" fill="#888"/><circle cx="122" cy="173" r="0.8" fill="#888"/><circle cx="122" cy="177.5" r="0.8" fill="#888"/>
<path d="M151.5 169 L161.5 178.5 M161.5 169 L151.5 178.5" stroke="#a8a6a8" stroke-width="1.2"/>
<path d="M187.5 173.5 L191.5 177.5 L200.5 168.5" fill="none" stroke="#a8a6a8" stroke-width="1.4"/>
<text x="225" y="177.5" font-family="Liberation Serif" font-style="italic" font-weight="bold" font-size="12.5" fill="#444">f</text>
<text x="229.3" y="177.8" font-family="Liberation Serif" font-style="italic" font-weight="bold" font-size="9.5" fill="#444">x</text>
<path d="M1031 170 L1034 173 L1037 170" fill="none" stroke="#444" stroke-width="1.3"/>
</g>
<defs><clipPath id="cm"><rect x="258" y="480" width="75.5" height="30"/></clipPath><clipPath id="c20"><rect x="0" y="666" width="31" height="8"/></clipPath></defs>
<g shape-rendering="geometricPrecision">
<text x="463.50" y="17.00" font-family="Liberation Sans" font-size="12" fill="#d4e8da" stroke="#d4e8da" stroke-width="0.25" textLength="118.15" lengthAdjust="spacingAndGlyphs">праздники.xlsx - Excel</text>
<text x="12.80" y="46.10" font-family="Liberation Sans" font-size="13" fill="#ffffff" stroke="#ffffff" stroke-width="0.3" textLength="29.74" lengthAdjust="spacingAndGlyphs">Файл</text>
<text x="133.01" y="46.10" font-family="Liberation Sans" font-size="13" fill="#ffffff" stroke="#ffffff" stroke-width="0.3" textLength="42.80" lengthAdjust="spacingAndGlyphs">Вставка</text>
<text x="195.87" y="46.10" font-family="Liberation Sans" font-size="13" fill="#ffffff" stroke="#ffffff" stroke-width="0.3" textLength="109.95" lengthAdjust="spacingAndGlyphs">Разметка страницы</text>
<text x="325.20" y="46.10" font-family="Liberation Sans" font-size="13" fill="#ffffff" stroke="#ffffff" stroke-width="0.3" textLength="54.53" lengthAdjust="spacingAndGlyphs">Формулы</text>
<text x="400.00" y="46.10" font-family="Liberation Sans" font-size="13" fill="#ffffff" stroke="#ffffff" stroke-width="0.3" textLength="43.71" lengthAdjust="spacingAndGlyphs">Данные</text>
<text x="462.26" y="46.10" font-family="Liberation Sans" font-size="13" fill="#ffffff" stroke="#ffffff" stroke-width="0.3" textLength="93.95" lengthAdjust="spacingAndGlyphs">Рецензирование</text>
<text x="573.09" y="46.10" font-family="Liberation Sans" font-size="13" fill="#ffffff" stroke="#ffffff" stroke-width="0.3" textLength="21.33" lengthAdjust="spacingAndGlyphs">Вид</text>
<text x="614.00" y="46.10" font-family="Liberation Sans" font-size="13" fill="#ffffff" stroke="#ffffff" stroke-width="0.3" textLength="46.85" lengthAdjust="spacingAndGlyphs">novaPDF</text>
<text x="678.77" y="46.10" font-family="Liberation Sans" font-size="13" fill="#ffffff" stroke="#ffffff" stroke-width="0.3" textLength="64.17" lengthAdjust="spacingAndGlyphs">Power Pivot</text>
<text x="779.67" y="46.10" font-family="Liberation Sans" font-size="13" fill="#ffffff" stroke="#ffffff" stroke-width="0.3" textLength="52.22" lengthAdjust="spacingAndGlyphs">Помощн</text>
<text x="840.73" y="46.10" font-family="Liberation Sans" font-size="13" fill="#ffffff" stroke="#ffffff" stroke-width="0.3" textLength="65.87" lengthAdjust="spacingAndGlyphs">Magranov...</text>
<text x="942.70" y="46.10" font-family="Liberation Sans" font-size="13" fill="#ffffff" stroke="#ffffff" stroke-width="0.3" textLength="82.34" lengthAdjust="spacingAndGlyphs">Общий доступ</text>
<text x="68.37" y="46.10" font-family="Liberation Sans" font-size="13" fill="#1f6d3d" stroke="#1f6d3d" stroke-width="0.2" textLength="46.17" lengthAdjust="spacingAndGlyphs">Главная</text>
<text x="4.13" y="108.70" font-family="Liberation Sans" font-size="13.3" fill="#7a7a7a" stroke="#7a7a7a" stroke-width="0.25" textLength="48.80" lengthAdjust="spacingAndGlyphs">Вставить</text>
<text x="1.00" y="144.00" font-family="Liberation Sans" font-size="11.8" fill="#444444" stroke="#444444" stroke-width="0.22" textLength="76.58" lengthAdjust="spacingAndGlyphs">Буфер обмена</text>
<text x="106.70" y="82.00" font-family="Liberation Sans" font-size="13" fill="#333" stroke="#333" stroke-width="0.22" textLength="33.90" lengthAdjust="spacingAndGlyphs">Calibri</text>
<text x="109.02" y="112.30" font-family="Liberation Sans" font-size="12.6" fill="#333" stroke="#333" stroke-width="0.22" font-weight="bold" textLength="11.65" lengthAdjust="spacingAndGlyphs">Ж</text>
<text x="132.50" y="112.30" font-family="Liberation Sans" font-size="12.6" fill="#333" stroke="#333" stroke-width="0.22" font-weight="bold" font-style="italic" textLength="7.83" lengthAdjust="spacingAndGlyphs">К</text>
<text x="155.80" y="112.30" font-family="Liberation Sans" font-size="12.6" fill="#333" stroke="#333" stroke-width="0.22" font-weight="bold" textLength="9.07" lengthAdjust="spacingAndGlyphs">Ч</text>
<text x="220.00" y="82.00" font-family="Liberation Sans" font-size="13" fill="#333" stroke="#333" stroke-width="0.22" textLength="11.19" lengthAdjust="spacingAndGlyphs">11</text>
<text x="176.80" y="144.00" font-family="Liberation Sans" font-size="11.8" fill="#444444" stroke="#444444" stroke-width="0.22" textLength="38.31" lengthAdjust="spacingAndGlyphs">Шрифт</text>
<text x="319.20" y="144.00" font-family="Liberation Sans" font-size="11.8" fill="#444444" stroke="#444444" stroke-width="0.22" textLength="80.66" lengthAdjust="spacingAndGlyphs">Выравнивание</text>
<text x="435.80" y="108.80" font-family="Liberation Sans" font-size="13" fill="#333" stroke="#333" stroke-width="0.22" textLength="65.14" lengthAdjust="spacingAndGlyphs">Защитить и</text>
<text x="433.00" y="124.50" font-family="Liberation Sans" font-size="13" fill="#333" stroke="#333" stroke-width="0.22" textLength="63.04" lengthAdjust="spacingAndGlyphs">поделиться</text>
<text x="457.00" y="144.00" font-family="Liberation Sans" font-size="11.8" fill="#444444" stroke="#444444" stroke-width="0.22" textLength="23.38" lengthAdjust="spacingAndGlyphs">RMS</text>
<text x="520.80" y="74.30" font-family="Liberation Sans" font-size="13" fill="#333" stroke="#333" stroke-width="0.22" textLength="41.25" lengthAdjust="spacingAndGlyphs">Общий</text>
<text x="557.30" y="98.60" font-family="Liberation Sans" font-size="16" fill="#333" stroke="#333" stroke-width="0.22" textLength="13.21" lengthAdjust="spacingAndGlyphs">%</text>
<text x="578.00" y="95.20" font-family="Liberation Sans" font-size="10" fill="#333" stroke="#333" stroke-width="0.22" font-weight="bold" textLength="14.23" lengthAdjust="spacingAndGlyphs">000</text>
<text x="533.00" y="144.00" font-family="Liberation Sans" font-size="11.8" fill="#444444" stroke="#444444" stroke-width="0.22" textLength="31.39" lengthAdjust="spacingAndGlyphs">Число</text>
<text x="628.40" y="74.30" font-family="Liberation Sans" font-size="13" fill="#333" stroke="#333" stroke-width="0.22" textLength="155.42" lengthAdjust="spacingAndGlyphs">Условное форматирование</text>
<text x="628.40" y="97.50" font-family="Liberation Sans" font-size="13" fill="#333" stroke="#333" stroke-width="0.22" textLength="158.73" lengthAdjust="spacingAndGlyphs">Форматировать как таблицу</text>
<text x="628.40" y="121.00" font-family="Liberation Sans" font-size="13" fill="#333" stroke="#333" stroke-width="0.22" textLength="69.71" lengthAdjust="spacingAndGlyphs">Стили ячеек</text>
<text x="688.20" y="144.00" font-family="Liberation Sans" font-size="11.8" fill="#444444" stroke="#444444" stroke-width="0.22" textLength="32.06" lengthAdjust="spacingAndGlyphs">Стили</text>
<text x="834.32" y="74.30" font-family="Liberation Sans" font-size="13" fill="#333" stroke="#333" stroke-width="0.22" textLength="48.38" lengthAdjust="spacingAndGlyphs">Вставить</text>
<text x="835.20" y="97.50" font-family="Liberation Sans" font-size="13" fill="#333" stroke="#333" stroke-width="0.22" textLength="44.10" lengthAdjust="spacingAndGlyphs">Удалить</text>
<text x="835.20" y="121.00" font-family="Liberation Sans" font-size="13" fill="#333" stroke="#333" stroke-width="0.22" textLength="42.76" lengthAdjust="spacingAndGlyphs">Формат</text>
<text x="837.50" y="144.00" font-family="Liberation Sans" font-size="11.8" fill="#444444" stroke="#444444" stroke-width="0.22" textLength="41.42" lengthAdjust="spacingAndGlyphs">Ячейки</text>
<text x="912.40" y="144.00" font-family="Liberation Sans" font-size="11.8" fill="#444444" stroke="#444444" stroke-width="0.22" textLength="88.17" lengthAdjust="spacingAndGlyphs">Редактирование</text>
<text x="10.00" y="177.60" font-family="Liberation Sans" font-size="13" fill="#222" stroke="#222" stroke-width="0.22" textLength="22.01" lengthAdjust="spacingAndGlyphs">C17</text>
<text x="64.33" y="212.40" font-family="Liberation Sans" font-size="16" fill="#222" stroke="#222" stroke-width="0.22" textLength="9.07" lengthAdjust="spacingAndGlyphs">A</text>
<text x="139.82" y="212.40" font-family="Liberation Sans" font-size="16" fill="#222" stroke="#222" stroke-width="0.22" textLength="9.07" lengthAdjust="spacingAndGlyphs">B</text>
<text x="215.32" y="212.40" font-family="Liberation Sans" font-size="16" fill="#222" stroke="#222" stroke-width="0.22" textLength="9.82" lengthAdjust="spacingAndGlyphs">C</text>
<text x="290.90" y="212.40" font-family="Liberation Sans" font-size="16" fill="#222" stroke="#222" stroke-width="0.22" textLength="9.82" lengthAdjust="spacingAndGlyphs">D</text>
<text x="366.82" y="212.40" font-family="Liberation Sans" font-size="16" fill="#222" stroke="#222" stroke-width="0.22" textLength="9.07" lengthAdjust="spacingAndGlyphs">E</text>
<text x="442.32" y="212.40" font-family="Liberation Sans" font-size="16" fill="#222" stroke="#222" stroke-width="0.22" textLength="8.31" lengthAdjust="spacingAndGlyphs">F</text>
<text x="529.40" y="212.40" font-family="Liberation Sans" font-size="16" fill="#222" stroke="#222" stroke-width="0.22" textLength="10.58" lengthAdjust="spacingAndGlyphs">G</text>
<text x="657.90" y="212.40" font-family="Liberation Sans" font-size="16" fill="#222" stroke="#222" stroke-width="0.22" textLength="9.82" lengthAdjust="spacingAndGlyphs">H</text>
<text x="778.30" y="212.40" font-family="Liberation Sans" font-size="16" fill="#222" stroke="#222" stroke-width="0.22" textLength="3.78" lengthAdjust="spacingAndGlyphs">I</text>
<text x="852.52" y="212.40" font-family="Liberation Sans" font-size="16" fill="#222" stroke="#222" stroke-width="0.22" textLength="6.80" lengthAdjust="spacingAndGlyphs">J</text>
<text x="925.90" y="212.40" font-family="Liberation Sans" font-size="16" fill="#222" stroke="#222" stroke-width="0.22" textLength="9.07" lengthAdjust="spacingAndGlyphs">K</text>
<text x="994.25" y="212.40" font-family="Liberation Sans" font-size="16" fill="#222" stroke="#222" stroke-width="0.22" textLength="7.56" lengthAdjust="spacingAndGlyphs">L</text>
<text x="6.61" y="683.10" font-family="Liberation Sans" font-size="15.8" fill="#222" stroke="#222" stroke-width="0.22" clip-path="url(#c20)">20</text>
<text x="10.50" y="236.60" font-family="Liberation Sans" font-size="15.8" fill="#222" stroke="#222" stroke-width="0.22">1</text>
<text x="11.50" y="260.10" font-family="Liberation Sans" font-size="15.8" fill="#222" stroke="#222" stroke-width="0.22">2</text>
<text x="11.00" y="283.60" font-family="Liberation Sans" font-size="15.8" fill="#222" stroke="#222" stroke-width="0.22">3</text>
<text x="11.00" y="307.10" font-family="Liberation Sans" font-size="15.8" fill="#222" stroke="#222" stroke-width="0.22">4</text>
<text x="11.00" y="330.60" font-family="Liberation Sans" font-size="15.8" fill="#222" stroke="#222" stroke-width="0.22">5</text>
<text x="11.00" y="354.10" font-family="Liberation Sans" font-size="15.8" fill="#222" stroke="#222" stroke-width="0.22">6</text>
<text x="11.50" y="377.60" font-family="Liberation Sans" font-size="15.8" fill="#222" stroke="#222" stroke-width="0.22">7</text>
<text x="11.00" y="401.10" font-family="Liberation Sans" font-size="15.8" fill="#222" stroke="#222" stroke-width="0.22">8</text>
<text x="11.00" y="424.60" font-family="Liberation Sans" font-size="15.8" fill="#222" stroke="#222" stroke-width="0.22">9</text>
<text x="6.11" y="448.10" font-family="Liberation Sans" font-size="15.8" fill="#222" stroke="#222" stroke-width="0.22">10</text>
<text x="6.69" y="471.60" font-family="Liberation Sans" font-size="15.8" fill="#222" stroke="#222" stroke-width="0.22">11</text>
<text x="6.61" y="495.10" font-family="Liberation Sans" font-size="15.8" fill="#222" stroke="#222" stroke-width="0.22">12</text>
<text x="6.11" y="518.60" font-family="Liberation Sans" font-size="15.8" fill="#222" stroke="#222" stroke-width="0.22">13</text>
<text x="6.11" y="542.10" font-family="Liberation Sans" font-size="15.8" fill="#222" stroke="#222" stroke-width="0.22">14</text>
<text x="6.11" y="565.60" font-family="Liberation Sans" font-size="15.8" fill="#222" stroke="#222" stroke-width="0.22">15</text>
<text x="6.11" y="589.10" font-family="Liberation Sans" font-size="15.8" fill="#222" stroke="#222" stroke-width="0.22">16</text>
<text x="6.61" y="612.60" font-family="Liberation Sans" font-size="15.8" fill="#222" stroke="#222" stroke-width="0.22">17</text>
<text x="6.11" y="636.10" font-family="Liberation Sans" font-size="15.8" fill="#222" stroke="#222" stroke-width="0.22">18</text>
<text x="6.11" y="659.60" font-family="Liberation Sans" font-size="15.8" fill="#222" stroke="#222" stroke-width="0.22">19</text>
<text x="261.69" y="260.50" font-family="Liberation Sans" font-size="15.9" fill="#000" stroke="#000" stroke-width="0.25" textLength="442.76" lengthAdjust="spacingAndGlyphs">Праздничные мероприятия Компании &quot;Праздник Навсегда&quot;</text>
<text x="337.00" y="307.50" font-family="Liberation Sans" font-size="15.9" fill="#000" stroke="#000" stroke-width="0.25" textLength="203.83" lengthAdjust="spacingAndGlyphs">Расценки за 1 мероприятие</text>
<text x="337.02" y="331.00" font-family="Liberation Sans" font-size="15.9" fill="#000" stroke="#000" stroke-width="0.25" textLength="49.65" lengthAdjust="spacingAndGlyphs">Банкет</text>
<text x="412.41" y="331.00" font-family="Liberation Sans" font-size="15.9" fill="#000" stroke="#000" stroke-width="0.25" textLength="63.80" lengthAdjust="spacingAndGlyphs">Барбекю</text>
<text x="488.64" y="331.00" font-family="Liberation Sans" font-size="15.9" fill="#000" stroke="#000" stroke-width="0.25" textLength="84.65" lengthAdjust="spacingAndGlyphs">Кофе-брейк</text>
<text x="587.51" y="331.00" font-family="Liberation Sans" font-size="15.9" fill="#000" stroke="#000" stroke-width="0.25" textLength="144.26" lengthAdjust="spacingAndGlyphs">Выездной ресторан</text>
<text x="369.00" y="354.50" font-family="Liberation Sans" font-size="15.9" fill="#000" stroke="#000" stroke-width="0.25" textLength="35.54" lengthAdjust="spacingAndGlyphs">2000</text>
<text x="444.29" y="354.50" font-family="Liberation Sans" font-size="15.9" fill="#000" stroke="#000" stroke-width="0.25" textLength="35.54" lengthAdjust="spacingAndGlyphs">1800</text>
<text x="543.69" y="354.50" font-family="Liberation Sans" font-size="15.9" fill="#000" stroke="#000" stroke-width="0.25" textLength="35.64" lengthAdjust="spacingAndGlyphs">1600</text>
<text x="702.15" y="354.50" font-family="Liberation Sans" font-size="15.9" fill="#000" stroke="#000" stroke-width="0.25" textLength="35.88" lengthAdjust="spacingAndGlyphs">1100</text>
<text x="337.00" y="378.00" font-family="Liberation Sans" font-size="15.9" fill="#000" stroke="#000" stroke-width="0.25" textLength="290.88" lengthAdjust="spacingAndGlyphs">Количество проведенных мероприятий</text>
<text x="345.70" y="401.50" font-family="Liberation Sans" font-size="15.9" fill="#000" stroke="#000" stroke-width="0.25" textLength="50.57" lengthAdjust="spacingAndGlyphs">Банкет</text>
<text x="414.41" y="401.50" font-family="Liberation Sans" font-size="15.9" fill="#000" stroke="#000" stroke-width="0.25" textLength="64.11" lengthAdjust="spacingAndGlyphs">Барбекю</text>
<text x="490.73" y="401.50" font-family="Liberation Sans" font-size="15.9" fill="#000" stroke="#000" stroke-width="0.25" textLength="84.85" lengthAdjust="spacingAndGlyphs">Кофе-брейк</text>
<text x="589.90" y="401.50" font-family="Liberation Sans" font-size="15.9" fill="#000" stroke="#000" stroke-width="0.25" textLength="144.97" lengthAdjust="spacingAndGlyphs">Выездной ресторан</text>
<text x="748.01" y="401.50" font-family="Liberation Sans" font-size="15.9" fill="#000" stroke="#000" stroke-width="0.25" textLength="62.53" lengthAdjust="spacingAndGlyphs">Выручка</text>
<text x="245.00" y="425.00" font-family="Liberation Sans" font-size="15.9" fill="#000" stroke="#000" stroke-width="0.25">1</text>
<text x="396.00" y="425.00" font-family="Liberation Sans" font-size="15.9" fill="#000" stroke="#000" stroke-width="0.25">5</text>
<text x="472.00" y="425.00" font-family="Liberation Sans" font-size="15.9" fill="#000" stroke="#000" stroke-width="0.25">4</text>
<text x="562.16" y="425.00" font-family="Liberation Sans" font-size="15.9" fill="#000" stroke="#000" stroke-width="0.25">23</text>
<text x="729.00" y="425.00" font-family="Liberation Sans" font-size="15.9" fill="#000" stroke="#000" stroke-width="0.25">7</text>
<text x="769.65" y="425.00" font-family="Liberation Sans" font-size="15.9" fill="#000" stroke="#000" stroke-width="0.25">61700</text>
<text x="245.00" y="448.50" font-family="Liberation Sans" font-size="15.9" fill="#000" stroke="#000" stroke-width="0.25">2</text>
<text x="396.00" y="448.50" font-family="Liberation Sans" font-size="15.9" fill="#000" stroke="#000" stroke-width="0.25">3</text>
<text x="472.00" y="448.50" font-family="Liberation Sans" font-size="15.9" fill="#000" stroke="#000" stroke-width="0.25">3</text>
<text x="571.00" y="448.50" font-family="Liberation Sans" font-size="15.9" fill="#000" stroke="#000" stroke-width="0.25">8</text>
<text x="729.00" y="448.50" font-family="Liberation Sans" font-size="15.9" fill="#000" stroke="#000" stroke-width="0.25">4</text>
<text x="769.65" y="448.50" font-family="Liberation Sans" font-size="15.9" fill="#000" stroke="#000" stroke-width="0.25">28600</text>
<text x="245.00" y="472.00" font-family="Liberation Sans" font-size="15.9" fill="#000" stroke="#000" stroke-width="0.25">3</text>
<text x="396.00" y="472.00" font-family="Liberation Sans" font-size="15.9" fill="#000" stroke="#000" stroke-width="0.25">2</text>
<text x="472.00" y="472.00" font-family="Liberation Sans" font-size="15.9" fill="#000" stroke="#000" stroke-width="0.25">6</text>
<text x="571.00" y="472.00" font-family="Liberation Sans" font-size="15.9" fill="#000" stroke="#000" stroke-width="0.25">4</text>
<text x="729.00" y="472.00" font-family="Liberation Sans" font-size="15.9" fill="#000" stroke="#000" stroke-width="0.25">3</text>
<text x="769.65" y="472.00" font-family="Liberation Sans" font-size="15.9" fill="#000" stroke="#000" stroke-width="0.25">24500</text>
<text x="245.00" y="495.50" font-family="Liberation Sans" font-size="15.9" fill="#000" stroke="#000" stroke-width="0.25">4</text>
<text x="396.00" y="495.50" font-family="Liberation Sans" font-size="15.9" fill="#000" stroke="#000" stroke-width="0.25">9</text>
<text x="463.16" y="495.50" font-family="Liberation Sans" font-size="15.9" fill="#000" stroke="#000" stroke-width="0.25">12</text>
<text x="563.34" y="495.50" font-family="Liberation Sans" font-size="15.9" fill="#000" stroke="#000" stroke-width="0.25">11</text>
<text x="720.16" y="495.50" font-family="Liberation Sans" font-size="15.9" fill="#000" stroke="#000" stroke-width="0.25">10</text>
<text x="769.65" y="495.50" font-family="Liberation Sans" font-size="15.9" fill="#000" stroke="#000" stroke-width="0.25">68200</text>
<text x="245.00" y="519.00" font-family="Liberation Sans" font-size="15.9" fill="#000" stroke="#000" stroke-width="0.25">5</text>
<text x="396.00" y="519.00" font-family="Liberation Sans" font-size="15.9" fill="#000" stroke="#000" stroke-width="0.25">6</text>
<text x="472.00" y="519.00" font-family="Liberation Sans" font-size="15.9" fill="#000" stroke="#000" stroke-width="0.25">1</text>
<text x="562.16" y="519.00" font-family="Liberation Sans" font-size="15.9" fill="#000" stroke="#000" stroke-width="0.25">12</text>
<text x="720.16" y="519.00" font-family="Liberation Sans" font-size="15.9" fill="#000" stroke="#000" stroke-width="0.25">20</text>
<text x="769.65" y="519.00" font-family="Liberation Sans" font-size="15.9" fill="#000" stroke="#000" stroke-width="0.25">53800</text>
<text x="261.09" y="425.00" font-family="Liberation Sans" font-size="15.9" fill="#000" stroke="#000" stroke-width="0.25" textLength="55.05" lengthAdjust="spacingAndGlyphs">Иванов</text>
<text x="261.09" y="448.50" font-family="Liberation Sans" font-size="15.9" fill="#000" stroke="#000" stroke-width="0.25" textLength="53.86" lengthAdjust="spacingAndGlyphs">Петров</text>
<text x="262.10" y="472.00" font-family="Liberation Sans" font-size="15.9" fill="#000" stroke="#000" stroke-width="0.25" textLength="63.03" lengthAdjust="spacingAndGlyphs">Сидоров</text>
<text x="262.00" y="519.00" font-family="Liberation Sans" font-size="15.9" fill="#000" stroke="#000" stroke-width="0.25" textLength="62.03" lengthAdjust="spacingAndGlyphs">Андреев</text>
<text x="261.08" y="495.50" font-family="Liberation Sans" font-size="15.9" fill="#000" stroke="#000" stroke-width="0.25" clip-path="url(#cm)" textLength="75.50" lengthAdjust="spacingAndGlyphs">Михайлов</text>
<text x="387.16" y="542.50" font-family="Liberation Sans" font-size="15.9" fill="#000" stroke="#000" stroke-width="0.25" font-weight="bold">25</text>
<text x="463.16" y="542.50" font-family="Liberation Sans" font-size="15.9" fill="#000" stroke="#000" stroke-width="0.25" font-weight="bold">26</text>
<text x="562.16" y="542.50" font-family="Liberation Sans" font-size="15.9" fill="#000" stroke="#000" stroke-width="0.25" font-weight="bold">58</text>
<text x="720.16" y="542.50" font-family="Liberation Sans" font-size="15.9" fill="#000" stroke="#000" stroke-width="0.25" font-weight="bold">44</text>
<text x="588.50" y="566.00" font-family="Liberation Sans" font-size="15.9" fill="#000" stroke="#000" stroke-width="0.25" textLength="122.54" lengthAdjust="spacingAndGlyphs">средняя выручка</text>
<text x="769.65" y="566.00" font-family="Liberation Sans" font-size="15.9" fill="#000" stroke="#000" stroke-width="0.25">47360</text>
<text x="5.00" y="717.70" font-family="Liberation Sans" font-size="11.5" fill="#444" stroke="#444" stroke-width="0.22" textLength="38.12" lengthAdjust="spacingAndGlyphs">Готово</text>
<text x="1004.00" y="716.80" font-family="Liberation Sans" font-size="11.3" fill="#444" stroke="#444" stroke-width="0.22" textLength="26.74" lengthAdjust="spacingAndGlyphs">115%</text>
<text x="112.00" y="692.00" font-family="Liberation Sans" font-size="13" fill="#1e6e3a" stroke="#1e6e3a" stroke-width="0.25" font-weight="bold" textLength="35.41" lengthAdjust="spacingAndGlyphs">Лист1</text>
</g>
<circle cx="412.7" cy="401.8" r="24.5" fill="rgba(255,255,0,0.36)" shape-rendering="geometricPrecision"/>
<path d="M413.5 401.5 L413.5 418 L417.5 414 L420.8 420.8 L423.3 419.8 L420 413 L425.3 413 Z" fill="#fff" stroke="#111" stroke-width="1.1" shape-rendering="geometricPrecision"/>
</svg></body></html>
